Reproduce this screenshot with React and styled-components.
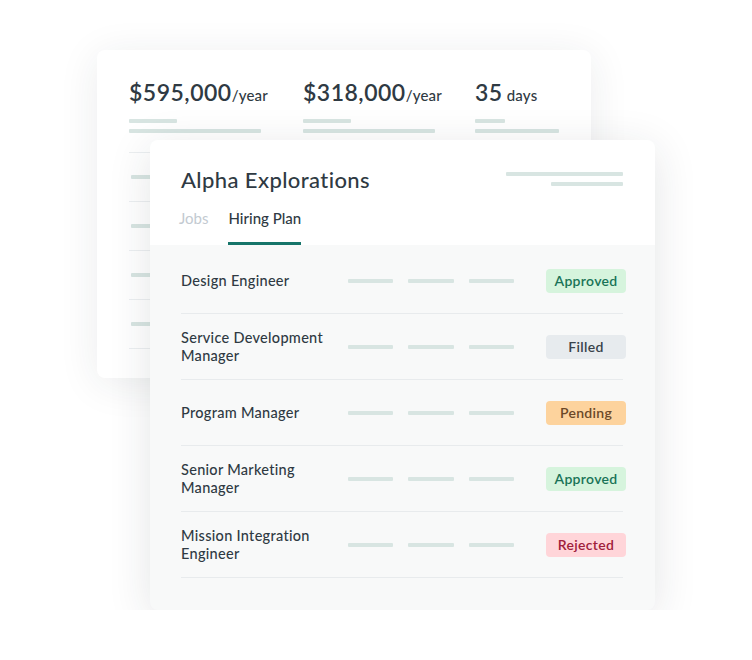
import styled, { createGlobalStyle } from "styled-components";

const GlobalStyle = createGlobalStyle`
  body {
    margin: 0;
    background: #ffffff;
    font-family: "Lato", "Open Sans", Arial, sans-serif;
    color: #2f3a43;
  }
`;

const stats = [
  { value: "$595,000", unit: "/year", short: 48, long: 132 },
  { value: "$318,000", unit: "/year", short: 48, long: 132 },
  { value: "35", unit: " days", short: 30, long: 84 },
];

const jobs = [
  { title: "Design Engineer", status: "approved" },
  { title: "Service Development Manager", status: "filled" },
  { title: "Program Manager", status: "pending" },
  { title: "Senior Marketing Manager", status: "approved" },
  { title: "Mission Integration Engineer", status: "rejected" },
];

const badgeColors = {
  approved: { bg: "#d6f4dd", fg: "#197357", label: "Approved" },
  filled: { bg: "#e7ebee", fg: "#39434b", label: "Filled" },
  pending: { bg: "#fdd39d", fg: "#6b4828", label: "Pending" },
  rejected: { bg: "#ffd5d9", fg: "#a0203b", label: "Rejected" },
};

export default function App() {
  return (
    <>
      <GlobalStyle />
      <Stage>
        <BackCard>
          <StatsRow>
            {stats.map((s) => (
              <Stat key={s.value}>
                <StatValue>
                  {s.value}
                  <StatUnit>{s.unit}</StatUnit>
                </StatValue>
                <Bar $w={s.short} />
                <Bar $w={s.long} />
              </Stat>
            ))}
          </StatsRow>
          <BackList>
            {[0, 1, 2, 3, 4].map((i) => (
              <BackRow key={i}>{i < 4 && <Bar $w={60} />}</BackRow>
            ))}
          </BackList>
        </BackCard>

        <FrontCard>
          <Header>
            <TitleRow>
              <Title>Alpha Explorations</Title>
              <HeaderBars>
                <Bar $w={117} />
                <Bar $w={72} />
              </HeaderBars>
            </TitleRow>
            <Tabs>
              <Tab>Jobs</Tab>
              <Tab $active>Hiring Plan</Tab>
            </Tabs>
          </Header>
          <Body>
            {jobs.map((job) => (
              <JobRow key={job.title}>
                <JobTitle>{job.title}</JobTitle>
                <RowBars>
                  <Bar $w={45} />
                  <Bar $w={46} />
                  <Bar $w={45} />
                </RowBars>
                <Badge $status={job.status}>{badgeColors[job.status].label}</Badge>
              </JobRow>
            ))}
          </Body>
        </FrontCard>
      </Stage>
    </>
  );
}

const Stage = styled.div`
  display: grid;
  padding: 50px 0 0 97px;
  width: 560px;
`;

const BackCard = styled.section`
  grid-area: 1 / 1;
  width: 494px;
  height: 328px;
  box-sizing: border-box;
  background: #ffffff;
  border-radius: 8px;
  box-shadow: 0 6px 40px rgba(30, 40, 50, 0.09);
  padding: 28px 32px 0 32px;
`;

const StatsRow = styled.div`
  display: grid;
  grid-template-columns: 174px 172px auto;
`;

const Stat = styled.div`
  display: flex;
  flex-direction: column;
  gap: 6px;
`;

const StatValue = styled.div`
  font-size: 23px;
  font-weight: 600;
  line-height: 28px;
  letter-spacing: 0.5px;
  margin-bottom: 4px;
  white-space: nowrap;
`;

const StatUnit = styled.span`
  font-size: 15px;
  font-weight: 500;
  letter-spacing: 0.2px;
`;

const Bar = styled.div`
  width: ${(p) => p.$w}px;
  height: 4px;
  border-radius: 1px;
  background: #d8e5e2;
`;

const BackList = styled.div`
  margin-top: 19px;
  display: flex;
  flex-direction: column;
`;

const BackRow = styled.div`
  height: 48px;
  border-top: 1px solid #eceff1;
  display: flex;
  align-items: center;
  padding-left: 2px;
`;

const FrontCard = styled.section`
  grid-area: 1 / 1;
  margin: 90px 0 0 53px;
  width: 505px;
  height: 470px;
  background: #f8f9f9;
  border-radius: 8px;
  box-shadow: 0 8px 44px rgba(30, 40, 50, 0.12);
  overflow: hidden;
  display: flex;
  flex-direction: column;
`;

const Header = styled.header`
  background: #ffffff;
  padding: 26px 32px 0 31px;
`;

const TitleRow = styled.div`
  display: flex;
  justify-content: space-between;
  align-items: flex-start;
`;

const Title = styled.h1`
  margin: 0;
  font-size: 22px;
  font-weight: 500;
  line-height: 28px;
  letter-spacing: 0.4px;
`;

const HeaderBars = styled.div`
  display: flex;
  flex-direction: column;
  align-items: flex-end;
  gap: 6px;
  padding-top: 6px;
`;

const Tabs = styled.nav`
  display: flex;
  gap: 20px;
  margin-top: 14px;
  margin-left: -2px;
`;

const Tab = styled.div`
  font-size: 15px;
  font-weight: ${(p) => (p.$active ? 500 : 400)};
  color: ${(p) => (p.$active ? "#2f3a43" : "#c3cad1")};
  line-height: 20px;
  padding-bottom: 14px;
  border-bottom: 3px solid ${(p) => (p.$active ? "#17756a" : "transparent")};
`;

const Body = styled.div`
  padding: 3px 32px 0 31px;
  display: flex;
  flex-direction: column;
`;

const JobRow = styled.div`
  height: 66px;
  box-sizing: border-box;
  display: flex;
  align-items: center;
  border-bottom: 1px solid #e8ebed;
`;

const JobTitle = styled.div`
  width: 160px;
  margin-right: 7px;
  font-size: 14.5px;
  font-weight: 500;
  line-height: 18px;
  letter-spacing: 0.3px;
`;

const RowBars = styled.div`
  display: flex;
  gap: 15px;
`;

const Badge = styled.div`
  margin-left: auto;
  margin-right: -3px;
  width: 80px;
  height: 24px;
  border-radius: 4px;
  display: flex;
  align-items: center;
  justify-content: center;
  font-size: 14px;
  font-weight: 600;
  letter-spacing: 0.3px;
  background: ${(p) => badgeColors[p.$status].bg};
  color: ${(p) => badgeColors[p.$status].fg};
`;
